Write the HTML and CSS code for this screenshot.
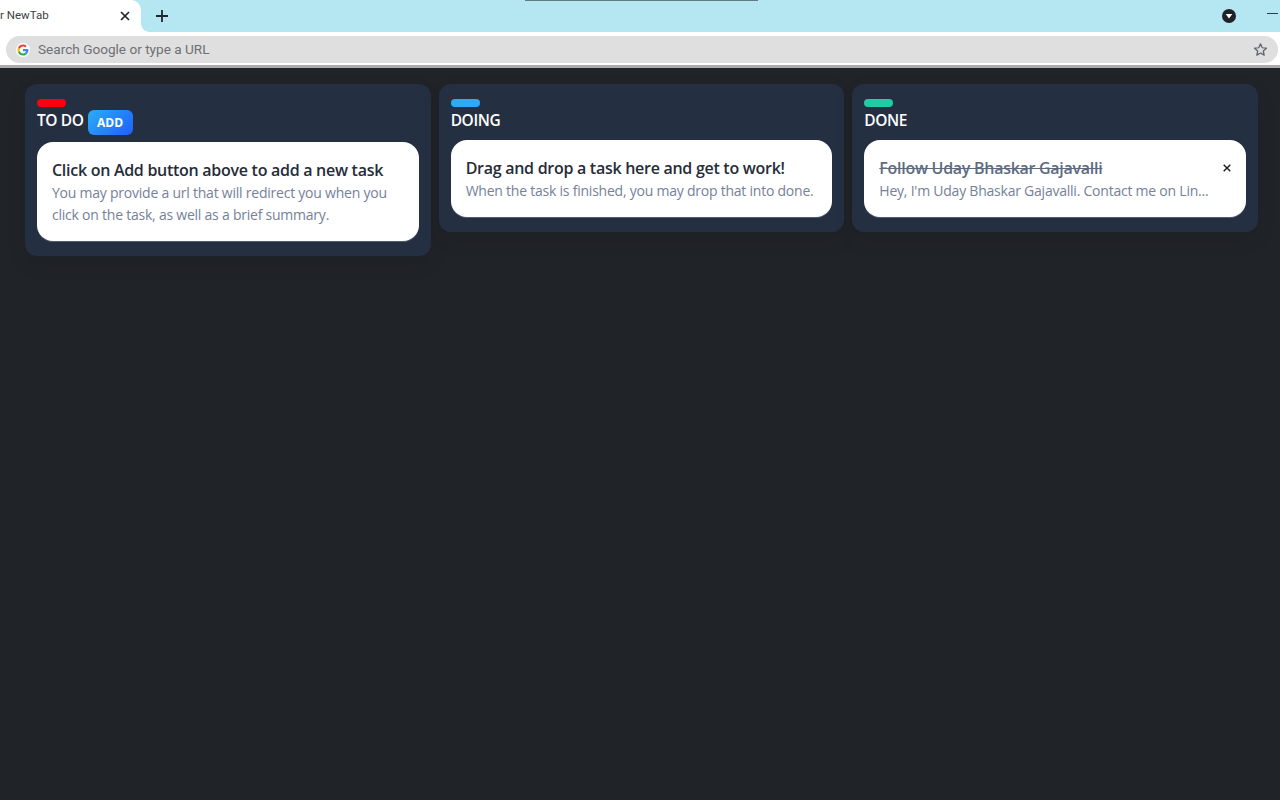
FILE: index.html
```html
<!DOCTYPE html>
<html lang="en">
<head>
<meta charset="utf-8">
<title>NewTab</title>
<link rel="stylesheet" href="styles.css">
</head>
<body>
<div class="tabstrip">
  <div class="tab">
    <span class="tab-title">r NewTab</span>
    <svg class="tab-close" width="10" height="10" viewBox="0 0 10 10"><path d="M1 1l8 8M9 1l-8 8" stroke="#1f2327" stroke-width="1.7" fill="none"/></svg>
  </div>
  <svg class="new-tab" width="12" height="12" viewBox="0 0 12 12"><path d="M6 0v12M0 6h12" stroke="#22262a" stroke-width="1.8" fill="none"/></svg>
  <div class="strip-spacer"></div>
  <div class="profile"><svg width="14" height="14" viewBox="0 0 14 14"><circle cx="7" cy="7" r="7" fill="#1f2327"/><path d="M3.7 5h6.6L7 9.6z" fill="#fff"/></svg></div>
  <div class="minimize"></div>
  <div class="capture-bar"></div>
</div>
<div class="toolbar">
  <div class="omnibox">
    <svg class="g-logo" width="14" height="14" viewBox="-6 -6 60 60"><circle cx="24" cy="24" r="30" fill="#fff"/><path fill="#EA4335" d="M24 9.500c3.500 0 6.700 1.200 9.200 3.600l6.900-6.900C35.900 2.400 30.500 0 24 0 14.600 0 6.500 5.400 2.600 13.200l8 6.200C12.500 13.600 17.800 9.500 24 9.500z"/><path fill="#4285F4" d="M47 24.500c0-1.600-.1-3.100-.4-4.500H24v9h12.900c-.6 3-2.200 5.500-4.700 7.200l7.700 6c4.500-4.200 7.100-10.300 7.100-17.700z"/><path fill="#FBBC05" d="M10.500 28.600c-.5-1.500-.8-3-.8-4.600s.3-3.100.8-4.600l-8-6.200C.9 16.400 0 20.100 0 24s.9 7.600 2.600 10.800z"/><path fill="#34A853" d="M24 48c6.500 0 11.900-2.100 15.900-5.800l-7.700-6c-2.200 1.400-4.900 2.300-8.200 2.300-6.200 0-11.500-4.100-13.400-9.900l-8 6.200C6.500 42.600 14.600 48 24 48z"/></svg>
    <span class="omni-text">Search Google or type a URL</span>
    <svg class="star" width="15" height="15" viewBox="0 0 24 24"><path d="M12 3l2.800 6.200 6.700.7-5 4.500 1.400 6.600L12 17.600 6.100 21l1.400-6.600-5-4.500 6.700-.7z" fill="none" stroke="#5f6368" stroke-width="2" stroke-linejoin="round"/></svg>
  </div>
</div>
<main class="board">
  <section class="column">
    <div class="tag tag-red"></div>
    <div class="col-head">
      <h2 class="col-title">TO DO</h2>
      <button class="add-btn">ADD</button>
    </div>
    <article class="card">
      <div class="card-body">
        <h3 class="card-title">Click on Add button above to add a new task</h3>
        <p class="card-text">You may provide a url that will redirect you when you click on the task, as well as a brief summary.</p>
      </div>
    </article>
  </section>
  <section class="column">
    <div class="tag tag-blue"></div>
    <div class="col-head">
      <h2 class="col-title">DOING</h2>
    </div>
    <article class="card">
      <div class="card-body">
        <h3 class="card-title">Drag and drop a task here and get to work!</h3>
        <p class="card-text">When the task is finished, you may drop that into done.</p>
      </div>
    </article>
  </section>
  <section class="column">
    <div class="tag tag-green"></div>
    <div class="col-head">
      <h2 class="col-title">DONE</h2>
    </div>
    <article class="card card-done">
      <div class="card-body">
        <h3 class="card-title struck">Follow Uday Bhaskar Gajavalli</h3>
        <p class="card-text">Hey, I'm Uday Bhaskar Gajavalli. Contact me on Lin...</p>
      </div>
      <svg class="card-close" width="8" height="8" viewBox="0 0 8 8"><path d="M.7.7l6.600 6.600M7.300.7L.7 7.300" stroke="#1a1d21" stroke-width="1.400" fill="none"/></svg>
    </article>
  </section>
</main>
</body>
</html>
```
FILE: styles.css
```css
* { box-sizing: border-box; }
html, body { margin: 0; height: 100%; }
body {
  width: 1280px;
  height: 800px;
  overflow: hidden;
  background: #202328;
  font-family: "Open Sans", "Noto Sans", sans-serif;
  display: flex;
  flex-direction: column;
}
.tabstrip {
  position: relative;
  height: 32px;
  flex: none;
  background: #b5e7f3;
  display: flex;
  align-items: center;
}
.tab {
  position: relative;
  width: 141px;
  height: 32px;
  background: #fff;
  border-radius: 0 10px 0 0;
  display: flex;
  align-items: center;
  font-family: "Roboto", sans-serif;
  font-size: 11.5px;
  color: #3c4043;
}
.tab::after {
  content: "";
  position: absolute;
  left: 100%;
  bottom: 0;
  width: 8px;
  height: 8px;
  background: radial-gradient(circle at 100% 0, transparent 7.5px, #fff 8px);
}
.tab-title { flex: 1; padding-bottom: 2px; }
.tab-close { margin-right: 11px; }
.new-tab { margin-left: 15px; }
.strip-spacer { flex: 1; }
.profile { display: flex; margin-right: 44px; }
.minimize {
  position: absolute;
  right: 2px;
  top: 13px;
  width: 11px;
  height: 1px;
  background: #26404a;
}
.capture-bar {
  position: absolute;
  left: 525px;
  top: 0;
  width: 233px;
  height: 1px;
  background: #5f7d85;
}
.toolbar {
  height: 36px;
  flex: none;
  background: #fff;
  padding: 4px 2px 3px 6px;
  border-bottom: 3px solid #a9abad;
  box-shadow: inset 0 -1px 0 #fff;
}
.omnibox {
  height: 27px;
  background: #dfdfdf;
  border-radius: 14px;
  display: flex;
  align-items: center;
  padding: 0 10px 0 10px;
}
.g-logo { flex: none; }
.omni-text {
  flex: 1;
  margin-left: 8px;
  padding-bottom: 2px;
  font-family: "Roboto", sans-serif;
  font-size: 13.6px;
  color: #6e7073;
}
.star { flex: none; }
.board {
  flex: 1;
  display: grid;
  grid-template-columns: repeat(3, minmax(0, 1fr));
  gap: 8px;
  padding: 16px 22px 0 25px;
  align-items: start;
}
.column {
  background: #252f42;
  border-radius: 12px;
  padding: 15px 12px 15px;
  box-shadow: 0 8px 20px rgba(0, 0, 0, 0.08);
}
.tag { width: 29px; height: 8px; border-radius: 4px; }
.tag-red { background: #f90111; }
.tag-blue { background: #2ea9f7; }
.tag-green { background: #20cca4; }
.col-head {
  display: flex;
  align-items: flex-start;
  margin-top: 3px;
  gap: 4px;
  margin-bottom: 7px;
}
.col-title {
  margin: 0 0 2px;
  font-size: 15.5px;
  line-height: 21px;
  font-weight: 600;
  letter-spacing: -0.4px;
  color: #fff;
}
.add-btn {
  width: 45px;
  height: 25px;
  padding: 0;
  border: 0;
  border-radius: 6px;
  background: linear-gradient(135deg, #2aaef5, #1f5ffb);
  color: #fff;
  font-family: inherit;
  font-size: 12px;
  font-weight: 700;
}
.card {
  background: #fff;
  border-radius: 16px;
  padding: 16px 15px 15px;
  display: flex;
  align-items: flex-start;
  box-shadow: 0 1px 0 rgba(130, 140, 160, 0.5);
}
.card-body { flex: 1; min-width: 0; }
.card-title {
  margin: 0;
  font-size: 16px;
  line-height: 24px;
  font-weight: 600;
  letter-spacing: -0.28px;
  color: #262c38;
}
.struck {
  text-decoration: line-through;
  color: #5e6a80;
}
.card-text {
  margin: 0;
  font-size: 14px;
  line-height: 22px;
  letter-spacing: -0.23px;
  color: #758199;
}
.card-close { flex: none; margin-top: 8px; }
```
